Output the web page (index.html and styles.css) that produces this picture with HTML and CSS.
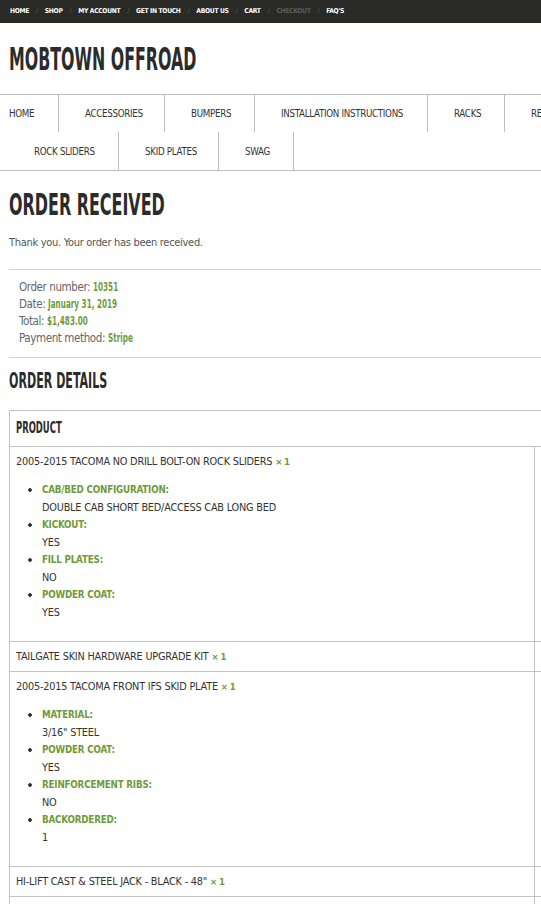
FILE: index.html
```html
<!DOCTYPE html>
<html lang="en">
<head>
<meta charset="utf-8">
<title>Order Received – Mobtown Offroad</title>
<link rel="stylesheet" href="styles.css">
</head>
<body>
<div class="page">
  <div class="topbar">
    <ul class="topnav">
      <li>HOME</li>
      <li>SHOP</li>
      <li>MY ACCOUNT</li>
      <li>GET IN TOUCH</li>
      <li>ABOUT US</li>
      <li>CART</li>
      <li class="muted">CHECKOUT</li>
      <li>FAQ'S</li>
    </ul>
  </div>

  <header class="masthead">
    <span class="display logo">MOBTOWN OFFROAD</span>
  </header>

  <nav class="mainnav">
    <ul class="menu-row row1">
      <li class="w-home">HOME</li>
      <li class="w-acc">ACCESSORIES</li>
      <li class="w-bump">BUMPERS</li>
      <li class="w-inst">INSTALLATION INSTRUCTIONS</li>
      <li class="w-racks">RACKS</li>
      <li class="w-rec">RECOVERY</li>
    </ul>
    <ul class="menu-row row2">
      <li class="w-rock">ROCK SLIDERS</li>
      <li class="w-skid">SKID PLATES</li>
      <li class="w-swag">SWAG</li>
    </ul>
  </nav>

  <main class="content">
    <h1 class="display title">ORDER RECEIVED</h1>
    <p class="thanks">Thank you. Your order has been received.</p>

    <ul class="overview">
      <li>Order number: <strong>10351</strong></li>
      <li>Date: <strong>January 31, 2019</strong></li>
      <li>Total: <strong>$1,483.00</strong></li>
      <li>Payment method: <strong>Stripe</strong></li>
    </ul>

    <h2 class="display subtitle">ORDER DETAILS</h2>

    <table class="order-table">
      <colgroup>
        <col class="col-product">
        <col class="col-total">
      </colgroup>
      <thead>
        <tr>
          <th><span class="display th-label">PRODUCT</span></th>
          <th class="total"><span class="display th-label">TOTAL</span></th>
        </tr>
      </thead>
      <tbody>
        <tr>
          <td>
            2005-2015 TACOMA NO DRILL BOLT-ON ROCK SLIDERS <strong class="qty">× 1</strong>
            <ul class="meta">
              <li><strong>CAB/BED CONFIGURATION:</strong>DOUBLE CAB SHORT BED/ACCESS CAB LONG BED</li>
              <li><strong>KICKOUT:</strong>YES</li>
              <li><strong>FILL PLATES:</strong>NO</li>
              <li><strong>POWDER COAT:</strong>YES</li>
            </ul>
          </td>
          <td class="total">$789.00</td>
        </tr>
        <tr>
          <td>TAILGATE SKIN HARDWARE UPGRADE KIT <strong class="qty">× 1</strong></td>
          <td class="total">$25.00</td>
        </tr>
        <tr>
          <td>
            2005-2015 TACOMA FRONT IFS SKID PLATE <strong class="qty">× 1</strong>
            <ul class="meta">
              <li><strong>MATERIAL:</strong>3/16" STEEL</li>
              <li><strong>POWDER COAT:</strong>YES</li>
              <li><strong>REINFORCEMENT RIBS:</strong>NO</li>
              <li><strong>BACKORDERED:</strong>1</li>
            </ul>
          </td>
          <td class="total">$389.00</td>
        </tr>
        <tr>
          <td>HI-LIFT CAST &amp; STEEL JACK - BLACK - 48" <strong class="qty">× 1</strong></td>
          <td class="total">$99.00</td>
        </tr>
        <tr>
          <td>SUBTOTAL</td>
          <td class="total">$1,302.00</td>
        </tr>
      </tbody>
    </table>
  </main>
</div>
</body>
</html>
```

FILE: styles.css
```css
* {
  box-sizing: border-box;
}

html {
  overflow-x: hidden;
}

body {
  margin: 0;
  background: #ffffff;
  color: #3a3a3a;
  font-family: "Liberation Sans Narrow", "DejaVu Sans Condensed", "Liberation Sans", sans-serif;
}

.page {
  width: 700px;
}

/* ---------- top utility bar ---------- */
.topbar {
  background: #2a2a27;
  height: 23px;
  padding-left: 10px;
  display: flex;
  align-items: center;
}

.topnav {
  list-style: none;
  margin: 0;
  padding: 0;
  display: flex;
}

.topnav li {
  font-size: 6.7px;
  font-weight: bold;
  letter-spacing: -0.3px;
  line-height: 23px;
  color: #ffffff;
  white-space: nowrap;
}

.topnav li + li::before {
  content: "/";
  color: #5e5e5a;
  font-weight: normal;
  padding: 0 7px;
}

.topnav li.muted {
  color: #5e5e5a;
}

/* ---------- condensed display type ---------- */
.display {
  display: inline-block;
  font-weight: bold;
  white-space: nowrap;
  color: #2b2b2b;
  transform: scaleX(0.56);
  transform-origin: 0 50%;
}

/* ---------- masthead ---------- */
.masthead {
  height: 71px;
  padding: 20px 0 0 9px;
}

.logo {
  font-size: 32px;
  line-height: 32px;
  transform: scaleX(0.55);
}

/* ---------- main menu ---------- */
.mainnav {
  border-top: 1px solid #bdbdbd;
  border-bottom: 1px solid #bdbdbd;
}

.menu-row {
  list-style: none;
  margin: 0;
  padding: 0;
  display: flex;
}

.menu-row li {
  flex: none;
  display: flex;
  align-items: center;
  padding-left: 26px;
  border-right: 1px solid #bdbdbd;
  font-size: 9.7px;
  letter-spacing: -0.3px;
  color: #333333;
  white-space: nowrap;
}

.row1 li {
  height: 37px;
}

.row2 li {
  height: 38px;
}

.menu-row .w-home { width: 59px; padding-left: 9px; }
.menu-row .w-acc { width: 106px; }
.menu-row .w-bump { width: 90px; }
.menu-row .w-inst { width: 173px; }
.menu-row .w-racks { width: 77px; }
.menu-row .w-rec { width: 110px; }
.menu-row .w-rock { width: 119px; padding-left: 34px; }
.menu-row .w-skid { width: 100px; }
.menu-row .w-swag { width: 75px; }

/* ---------- content ---------- */
.content {
  padding: 0 0 40px 9px;
}

.title {
  margin: 19px 0 0;
  font-size: 30px;
  line-height: 30px;
  transform: scaleX(0.59);
}

.thanks {
  margin: 13.5px 0 0;
  font-size: 11px;
  letter-spacing: -0.3px;
  line-height: 17px;
  color: #555555;
}

.overview {
  list-style: none;
  margin: 18.5px 0 0;
  padding: 8.5px 0 10.5px 10px;
  border-top: 1px solid #d4d4d4;
  border-bottom: 1px solid #d4d4d4;
  font-size: 11.5px;
  letter-spacing: -0.4px;
  line-height: 17px;
  color: #666666;
}

.overview strong {
  display: inline-block;
  color: #6f9a3a;
  letter-spacing: 0;
  transform: scaleX(0.7);
  transform-origin: 0 50%;
}

.subtitle {
  display: block;
  margin: 12px 0 0;
  font-size: 22px;
  line-height: 22px;
  transform: scaleX(0.56);
}

/* ---------- order table ---------- */
.order-table {
  margin-top: 18px;
  border-collapse: collapse;
  table-layout: fixed;
  width: 690px;
  border: 1px solid #c4c4c4;
  font-size: 10.8px;
  letter-spacing: -0.2px;
  line-height: 17.5px;
  color: #333333;
}

.col-product {
  width: 525px;
}

.order-table tr {
  border-top: 1px solid #c4c4c4;
}

.order-table th {
  text-align: left;
  padding: 9px 7px 8px 6px;
  line-height: 17px;
  letter-spacing: 0;
}

.th-label {
  font-size: 15px;
  transform: scaleX(0.625);
}

.order-table td {
  vertical-align: top;
  padding: 6px 7px 6px 6px;
}

.order-table .total {
  text-align: right;
}

.order-table td.total {
  border-left: 1px solid #c4c4c4;
}

.qty {
  color: #6f9a3a;
  font-size: 9.5px;
  letter-spacing: -0.6px;
}

.meta {
  list-style: none;
  margin: 10.5px 0 13.5px;
  padding-left: 12px;
}

.meta li {
  padding-left: 14px;
  background: radial-gradient(circle at 2px 2px, #333333 1.5px, rgba(51, 51, 51, 0) 2.2px) 0 7px / 4px 4px no-repeat;
}

.meta strong {
  display: block;
  color: #6f9a3a;
  transform: scaleX(0.9);
  transform-origin: 0 50%;
}
```
